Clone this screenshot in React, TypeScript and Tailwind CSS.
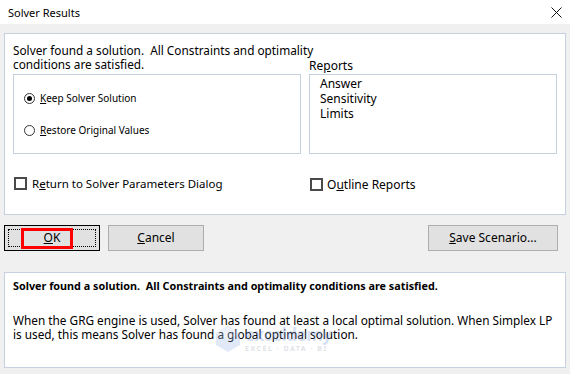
import React from 'react';

const Radio: React.FC<{ checked?: boolean }> = ({ checked }) => (
  <span className="w-[11px] h-[11px] rounded-full border border-[#333] bg-white flex items-center justify-center shrink-0">
    {checked && <span className="w-[5px] h-[5px] rounded-full bg-black" />}
  </span>
);

const CheckBox: React.FC = () => (
  <span className="w-[13px] h-[13px] border-2 border-[#4a4a4a] bg-white shrink-0" />
);

const App: React.FC = () => {
  return (
    <div className="w-[570px] h-[374px] bg-[#f0f0f0] flex flex-col font-['Noto_Sans',sans-serif] text-black overflow-hidden">
      {/* title bar */}
      <div className="h-[24px] bg-white flex items-center justify-between pl-[8px] pr-[8px]">
        <span className="text-[11px] leading-[14px] pt-[1px]">Solver Results</span>
        <svg width="11" height="11" viewBox="0 0 11 11" className="mt-[1px]">
          <path d="M0.5 0.5 L10.5 10.5 M10.5 0.5 L0.5 10.5" stroke="#111" strokeWidth="1" fill="none" />
        </svg>
      </div>

      {/* main panel */}
      <div className="mx-[4px] mt-[9px] h-[182px] border border-[#c5d1de] bg-white px-[8px] pt-[9px] flex flex-col">
        <div className="flex gap-[8px]">
          <div className="w-[288px] flex flex-col">
            <p className="text-[11.8px] leading-[14px] whitespace-nowrap">
              Solver found a solution.&nbsp; All Constraints and optimality
              <br />
              conditions are satisfied.
            </p>
            <div className="mt-[3px] h-[80px] border border-[#c5d1de] pl-[10px] pt-[18px] flex flex-col gap-[21px]">
              <label className="flex items-center gap-[5px] text-[10px] leading-[11px]">
                <Radio checked />
                <span><u>K</u>eep Solver Solution</span>
              </label>
              <label className="flex items-center gap-[5px] text-[10px] leading-[11px]">
                <Radio />
                <span><u>R</u>estore Original Values</span>
              </label>
            </div>
          </div>
          <div className="w-[248px] flex flex-col">
            <div className="h-[31px] pt-[16px] text-[12px] leading-[14px]">
              Re<u>p</u>orts
            </div>
            <div className="h-[80px] border border-[#c5d1de] pl-[10px] pt-[1px] text-[12px] leading-[15px]">
              <div>Answer</div>
              <div>Sensitivity</div>
              <div>Limits</div>
            </div>
          </div>
        </div>
        <div className="flex gap-[8px] mt-[22px]">
          <label className="w-[288px] flex items-center gap-[5px] pl-[1px] text-[11.5px] leading-[13px]">
            <CheckBox />
            <span>R<u>e</u>turn to Solver Parameters Dialog</span>
          </label>
          <label className="flex items-center gap-[4px] pl-[1px] mt-[2px] text-[12px] leading-[13px]">
            <CheckBox />
            <span>O<u>u</u>tline Reports</span>
          </label>
        </div>
      </div>

      {/* buttons */}
      <div className="mt-[10px] pl-[4px] pr-[12px] flex items-center justify-between">
        <div className="flex gap-[8px]">
          <button className="relative w-[96px] h-[26px] border border-black bg-[#e1e1e1] text-[12px] flex items-center justify-center">
            <span className="absolute inset-[3px] border border-dotted border-black" />
            <span className="absolute left-[16px] top-[2px] w-[52px] h-[21px] border-[3px] border-[#ff0000]" />
            <span className="relative"><u>O</u>K</span>
          </button>
          <button className="w-[96px] h-[26px] border border-[#adadad] bg-[#e1e1e1] text-[12px] flex items-center justify-center">
            <span><u>C</u>ancel</span>
          </button>
        </div>
        <button className="w-[130px] h-[26px] border border-[#adadad] bg-[#e1e1e1] text-[12px] flex items-center justify-center">
          <span><u>S</u>ave Scenario...</span>
        </button>
      </div>

      {/* message panel */}
      <div className="relative mx-[4px] mt-[21px] h-[96px] border border-[#c5d1de] bg-white px-[8px] pt-[6px] leading-[14px]">
        <p className="font-bold whitespace-nowrap text-[10.8px]">
          Solver found a solution.&nbsp; All Constraints and optimality conditions are satisfied.
        </p>
        <p className="mt-[20px] whitespace-nowrap text-[11.8px]">
          When the GRG engine is used, Solver has found at least a local optimal solution. When Simplex LP
          <br />
          is used, this means Solver has found a global optimal solution.
        </p>
        {/* watermark */}
        <div className="absolute left-[210px] top-[52px] flex items-center gap-[4px] opacity-30 pointer-events-none">
          <svg width="26" height="28" viewBox="0 0 26 28">
            <path d="M13 1 L25 8 L25 20 L13 27 L1 20 L1 8 Z" fill="#9db4e8" />
            <path d="M13 1 L25 8 L13 15 L1 8 Z" fill="#c4d3f3" />
          </svg>
          <div className="flex flex-col leading-none">
            <span className="text-[17px] font-bold text-[#7f9be0] tracking-tight">exceldemy</span>
            <span className="text-[7px] font-bold text-[#9aa3b5] tracking-[1.5px] mt-[2px]">EXCEL · DATA · BI</span>
          </div>
        </div>
      </div>
    </div>
  );
};

export default App;
